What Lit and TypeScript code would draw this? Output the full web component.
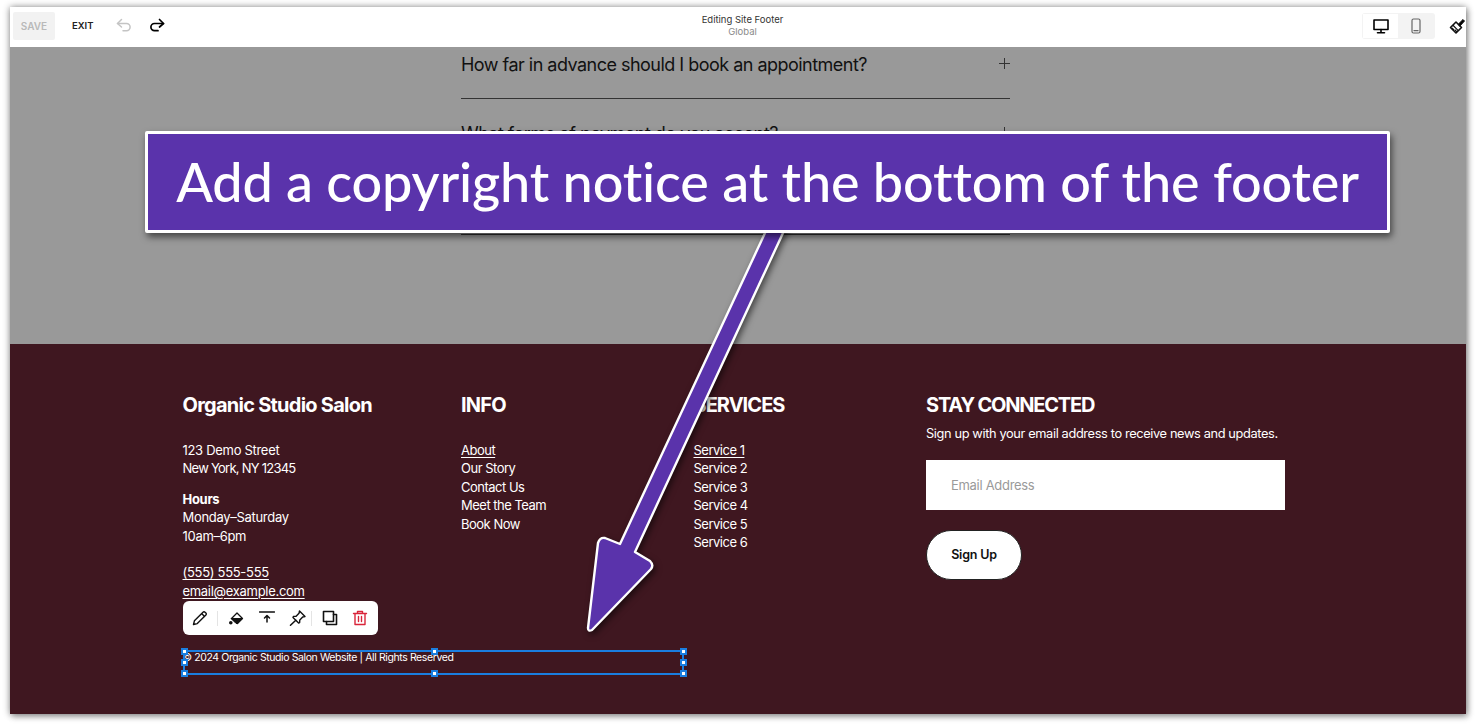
import { LitElement, html, css, svg } from "lit";
import { customElement } from "lit/decorators.js";

const ic = (w: number, h: number, body: unknown, cls = "") =>
  html`<svg class=${cls} width=${w} height=${h} viewBox="0 0 ${w} ${h}" fill="none" stroke="currentColor" stroke-width="1.5" stroke-linecap="round" stroke-linejoin="round">${body}</svg>`;

const plus = () => ic(11, 11, svg`<path d="M5.5 0 V11 M0 5.5 H11" stroke-width="1" stroke-linecap="butt"/>`);

@customElement("app-root")
export class AppRoot extends LitElement {
  static styles = css`
    :host { display: block; width: 1476px; height: 727px; background: #fff; font-family: "Inter", "Liberation Sans", sans-serif; overflow: hidden; position: relative; }
    .window { position: absolute; left: 10px; top: 7px; width: 1456px; height: 707px; display: flex; flex-direction: column; box-shadow: 0 0 7px rgba(0,0,0,.45), 2px 3px 6px rgba(0,0,0,.25); overflow: hidden; }
    .top { height: 40px; flex: none; box-sizing: border-box; padding-bottom: 2px; background: #fff; display: flex; align-items: center; position: relative; color: #111; }
    .save { margin-left: 3px; width: 42px; height: 28px; background: #f2f2f2; border-radius: 2px; color: #b9b9b9; font-size: 10px; font-weight: 600; display: flex; align-items: center; justify-content: center; }
    .exit { margin-left: 17px; font-size: 9.5px; font-weight: 600; color: #222; margin-bottom: 1px; }
    .undo { margin-left: 22px; color: #c4c4c4; display: flex; margin-bottom: 2px; }
    .redo { margin-left: 17px; color: #000; display: flex; margin-bottom: 2px; }
    .title { flex: none; width: 300px; margin-left: 428px; text-align: center; font-size: 9.5px; line-height: 12px; color: #333; }
    .title div + div { color: #8a8a8a; }
    .right { margin-left: auto; display: flex; align-items: center; gap: 14px; margin-right: -1px; }
    .toggle { width: 73px; height: 26px; background: #f3f3f3; border-radius: 3px; display: flex; padding: 1px; box-sizing: border-box; }
    .tg { flex: 1; display: flex; align-items: center; justify-content: center; }
    .tg.on { background: #fff; color: #000; flex: 0 0 35px; }
    .tg.off { color: #666; }
    .brush { display: flex; margin-right: 1px; }
    .faq { height: 297px; flex: none; background: #999; color: #111; box-sizing: border-box; padding-left: 451px; }
    .row { width: 549px; height: 68px; border-bottom: 1px solid #333; box-sizing: border-box; display: flex; justify-content: space-between; align-items: flex-start; font-size: 18px; letter-spacing: -0.52px; line-height: 22px; padding: 7px 0 0; }
    .row:first-child { height: 52px; }
    .row svg { margin-top: 4px; color: #333; }
    .row + .row { padding-top: 24px; }
    .footer { flex: 1; background: #3f1720; color: #fff; padding: 49px 0 0 172.5px; position: relative; }
    .cols { display: grid; grid-template-columns: 278.5px 232.5px 232.5px 360px; }
    h2 { margin: 0; font-size: 20px; line-height: 25px; font-weight: 700; letter-spacing: -0.75px; }
    h2.tight { letter-spacing: -1.2px; }
    h2.mid { letter-spacing: -0.95px; }
    .body { font-size: 13px; line-height: 18.5px; letter-spacing: -0.3px; margin-top: 22.6px; }
    .body.narrow { letter-spacing: -0.5px; }
    .body p { margin: 0 0 12px; }
    .body p.gap { margin-bottom: 18px; }
    .nums { letter-spacing: -0.75px; }
    u { text-underline-offset: 2px; text-decoration-thickness: 1px; }
    .body.sub { margin-top: 6px; font-size: 12.8px; letter-spacing: -0.37px; line-height: 20px; white-space: nowrap; }
    .input { margin-top: 16px; width: 359px; height: 50px; background: #fff; color: #9a9a9a; font-size: 13px; letter-spacing: -0.3px; display: flex; align-items: center; padding-left: 25px; box-sizing: border-box; }
    .btn { margin-top: 19.5px; width: 96px; height: 50px; border-radius: 25px; background: #fff; color: #111; border: 1px solid #222; box-sizing: border-box; font-size: 12.5px; letter-spacing: -0.2px; font-weight: 600; display: flex; align-items: center; justify-content: center; }
    .copy { font-size: 10.5px; line-height: 14px; letter-spacing: -0.4px; margin: 0; white-space: nowrap; }
    .copyWrap { margin-top: 51px; }
    .tools { position: absolute; left: 173px; top: 257px; width: 195px; height: 34px; background: #fff; border-radius: 6px; color: #111; display: flex; align-items: center; box-sizing: border-box; padding-left: 9px; }
    .tools svg { flex: none; }
    .sep { width: 1px; height: 15px; background: #e4e4e4; flex: none; }
    .sp { flex: none; }
    .del { color: #d9253a; display: flex; }
    .frame { position: absolute; left: 173px; top: 306px; width: 497px; height: 21px; border: 2px solid #1a7ee0; pointer-events: none; }
    .h { position: absolute; width: 3px; height: 3px; background: #fff; border: 2px solid #1a7ee0; }
    .callout { position: absolute; left: 145px; top: 131px; width: 1245px; height: 101.5px; box-sizing: border-box; border: 3px solid #fff; border-radius: 2px; background: #5a33ab; color: #fff; font-family: "Lato", sans-serif; font-size: 54px; font-weight: 500; letter-spacing: -0.16px; display: flex; align-items: center; justify-content: center; white-space: nowrap; box-shadow: 2px 4px 7px rgba(0,0,0,.55); }
    .arrow { position: absolute; left: 0; top: 0; filter: drop-shadow(2px 3px 3px rgba(0,0,0,.55)); }
  `;

  render() {
    const handles = [
      [-4, -4], [246, -4], [495, -4], [-4, 7], [495, 7], [-4, 18], [246, 18], [495, 18],
    ];
    return html`
      <div class="window">
        <div class="top">
          <div class="save">SAVE</div>
          <div class="exit">EXIT</div>
          <span class="undo">${ic(16, 14, svg`<path d="M5.5 1.5 L1.5 5.5 L5.5 9"/><path d="M1.5 5.5 H10.5 a3.6 3.6 0 0 1 0 7.2 H7"/>`)}</span>
          <span class="redo">${ic(16, 14, svg`<path d="M10.5 1.5 L14.5 5.5 L10.5 9" stroke-width="1.7"/><path d="M14.5 5.5 H5.5 a3.6 3.6 0 0 0 0 7.2 H9" stroke-width="1.7"/>`)}</span>
          <div class="title"><div>Editing Site Footer</div><div>Global</div></div>
          <div class="right">
            <div class="toggle">
              <div class="tg on">${ic(16, 15, svg`<rect x="1" y="1" width="14" height="9.5" stroke-width="1.6"/><path d="M8 10.5 V13.5 M4.5 13.8 H11.5" stroke-width="1.6"/>`)}</div>
              <div class="tg off">${ic(10, 16, svg`<rect x="1" y="1" width="8" height="14" rx="1.5" stroke-width="1.2"/><path d="M3 12.6 H7" stroke-width="1.4"/>`)}</div>
            </div>
            <span class="brush">${ic(17, 17, svg`<path d="M1.5 9.5 L7 4 L12.5 9.5 L7 15 Z" fill="#fff" stroke-width="1.6"/><path d="M4.2 7.5 L9 12.3 M4.5 11.5 L3.2 10.2 M7.5 13.5 L6 12" stroke-width="1.2"/><path d="M9.5 6 L14 1.5 L15.5 3 L11 8 Z" fill="#000" stroke-width="1"/>`)}</span>
          </div>
        </div>
        <div class="faq">
          <div class="row"><span>How far in advance should I book an appointment?</span>${plus()}</div>
          <div class="row"><span>What forms of payment do you accept?</span>${plus()}</div>
          <div class="row"></div>
        </div>
        <div class="footer">
          <div class="cols">
            <div>
              <h2>Organic Studio Salon</h2>
              <div class="body">
                <p>123 Demo Street<br /><span class="nums">New York, NY 12345</span></p>
                <p class="gap"><b>Hours</b><br />Monday–Saturday<br />10am–6pm</p>
                <p><u>(555) 555-555</u><br /><u>email@example.com</u></p>
              </div>
              <div class="copyWrap"><p class="copy">© 2024 Organic Studio Salon Website | All Rights Reserved</p></div>
            </div>
            <div>
              <h2>INFO</h2>
              <div class="body narrow"><u>About</u><br />Our Story<br />Contact Us<br />Meet the Team<br />Book Now</div>
            </div>
            <div>
              <h2 class="mid">SERVICES</h2>
              <div class="body narrow"><u>Service 1</u><br />Service 2<br />Service 3<br />Service 4<br />Service 5<br />Service 6</div>
            </div>
            <div>
              <h2 class="tight">STAY CONNECTED</h2>
              <div class="body sub">Sign up with your email address to receive news and updates.</div>
              <div class="input">Email Address</div>
              <div class="btn">Sign Up</div>
            </div>
          </div>
          <div class="tools">
            ${ic(16, 16, svg`<path d="M1.5 14.5 L2.4 10.8 L11 2.2 a1.4 1.4 0 0 1 2 0 L13.9 3.1 a1.4 1.4 0 0 1 0 2 L5.3 13.6 Z M9.7 3.6 L12.5 6.4" stroke-width="1.4"/>`)}
            <span class="sep" style="margin:0 10px 0 9px"></span>
            ${ic(16, 16, svg`<path d="M3.5 8.5 L9 3 L14.5 8.5 L9.5 13.5 Z" stroke-width="1.3"/><path d="M3.5 8.5 H14.5 L9.5 13.5 L8.5 13.5 Z" fill="currentColor" stroke-width="1"/><circle cx="2.8" cy="12.8" r="1.8" fill="currentColor" stroke="none"/>`)}
            <span class="sp" style="width:15px"></span>
            ${ic(16, 16, svg`<path d="M0.5 2 H15.5" stroke-width="1.5"/><path d="M8 12 V6 M5.5 8 L8 5.5 L10.5 8" stroke-width="1.5"/>`)}
            <span class="sp" style="width:14px"></span>
            ${ic(17, 16, svg`<path d="M10.5 1 L16 6.5 L13.7 7 L10.8 9.9 L10.6 12.6 L9.6 13 L4 7.4 L4.4 6.4 L7.1 6.2 L10 3.3 Z" stroke-width="1.4"/><path d="M6.8 10.2 L1.5 15.2" stroke-width="1.5"/>`)}
            <span class="sep" style="margin:0 10px 0 5px"></span>
            ${ic(16, 16, svg`<rect x="1.5" y="1.5" width="10" height="10" stroke-width="1.6"/><path d="M11.5 4.5 H14.5 V14.5 H4.5 V11.5" stroke-width="1.6"/>`)}
            <span class="sp" style="width:14px"></span>
            <span class="del">${ic(16, 16, svg`<path d="M1.5 3.5 H14.5 M5.5 3.5 V1.5 H10.5 V3.5 M3 3.5 V14.5 H13 V3.5 M6.5 6.5 V11.5 M9.5 6.5 V11.5" stroke-width="1.4"/>`)}</span>
          </div>
          <div class="frame">
            ${handles.map(([x, y]) => html`<span class="h" style="left:${x}px;top:${y}px"></span>`)}
          </div>
        </div>
      </div>
      <svg class="arrow" width="1476" height="727" viewBox="0 0 1476 727">
        <path d="M800 196 L783 233 L635 552 L650 561 Q654 565 651 569 L592 630 Q588 632 588 628 L598 543 Q600 537 605 538 L620 544 L765 233 L782 196 Z" fill="#5a33ab" stroke="#fff" stroke-width="2.4" stroke-linejoin="round"/>
      </svg>
      <div class="callout">Add a copyright notice at the bottom of the footer</div>
    `;
  }
}
